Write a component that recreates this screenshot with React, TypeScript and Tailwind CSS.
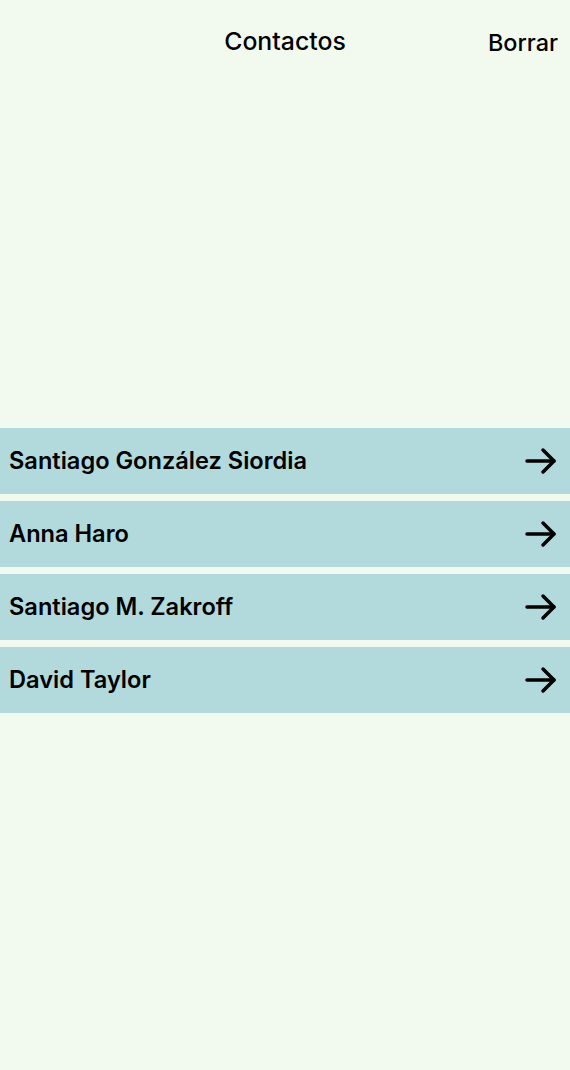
import React from "react";

const names = ["Santiago González Siordia", "Anna Haro", "Santiago M. Zakroff", "David Taylor"];

function Arrow() {
  return (
    <svg width="32" height="28" viewBox="0 0 32 28" fill="none" stroke="#000" strokeWidth="3.5" strokeLinecap="round" strokeLinejoin="round">
      <path d="M2 14 H29" />
      <path d="M18 3 L29 14 L18 25" />
    </svg>
  );
}

export default function App() {
  return (
    <div className="w-[570px] h-[1070px] bg-[#f2faf0] flex flex-col" style={{ fontFamily: "Inter, 'Noto Sans', sans-serif" }}>
      <div className="h-[84px] flex items-center relative">
        <div className="flex-1 text-center text-[24.8px] font-medium text-black">Contactos</div>
        <div className="absolute right-[12px] top-[25px] text-[23.4px] font-medium text-black">Borrar</div>
      </div>
      <div className="mt-[344px] flex flex-col gap-[7px]">
        {names.map((n) => (
          <div key={n} className="h-[66px] bg-[#b2dadc] flex items-center justify-between pl-[9px] pr-[13px]">
            <span className="text-[23.6px] font-semibold text-black">{n}</span>
            <Arrow />
          </div>
        ))}
      </div>
    </div>
  );
}
